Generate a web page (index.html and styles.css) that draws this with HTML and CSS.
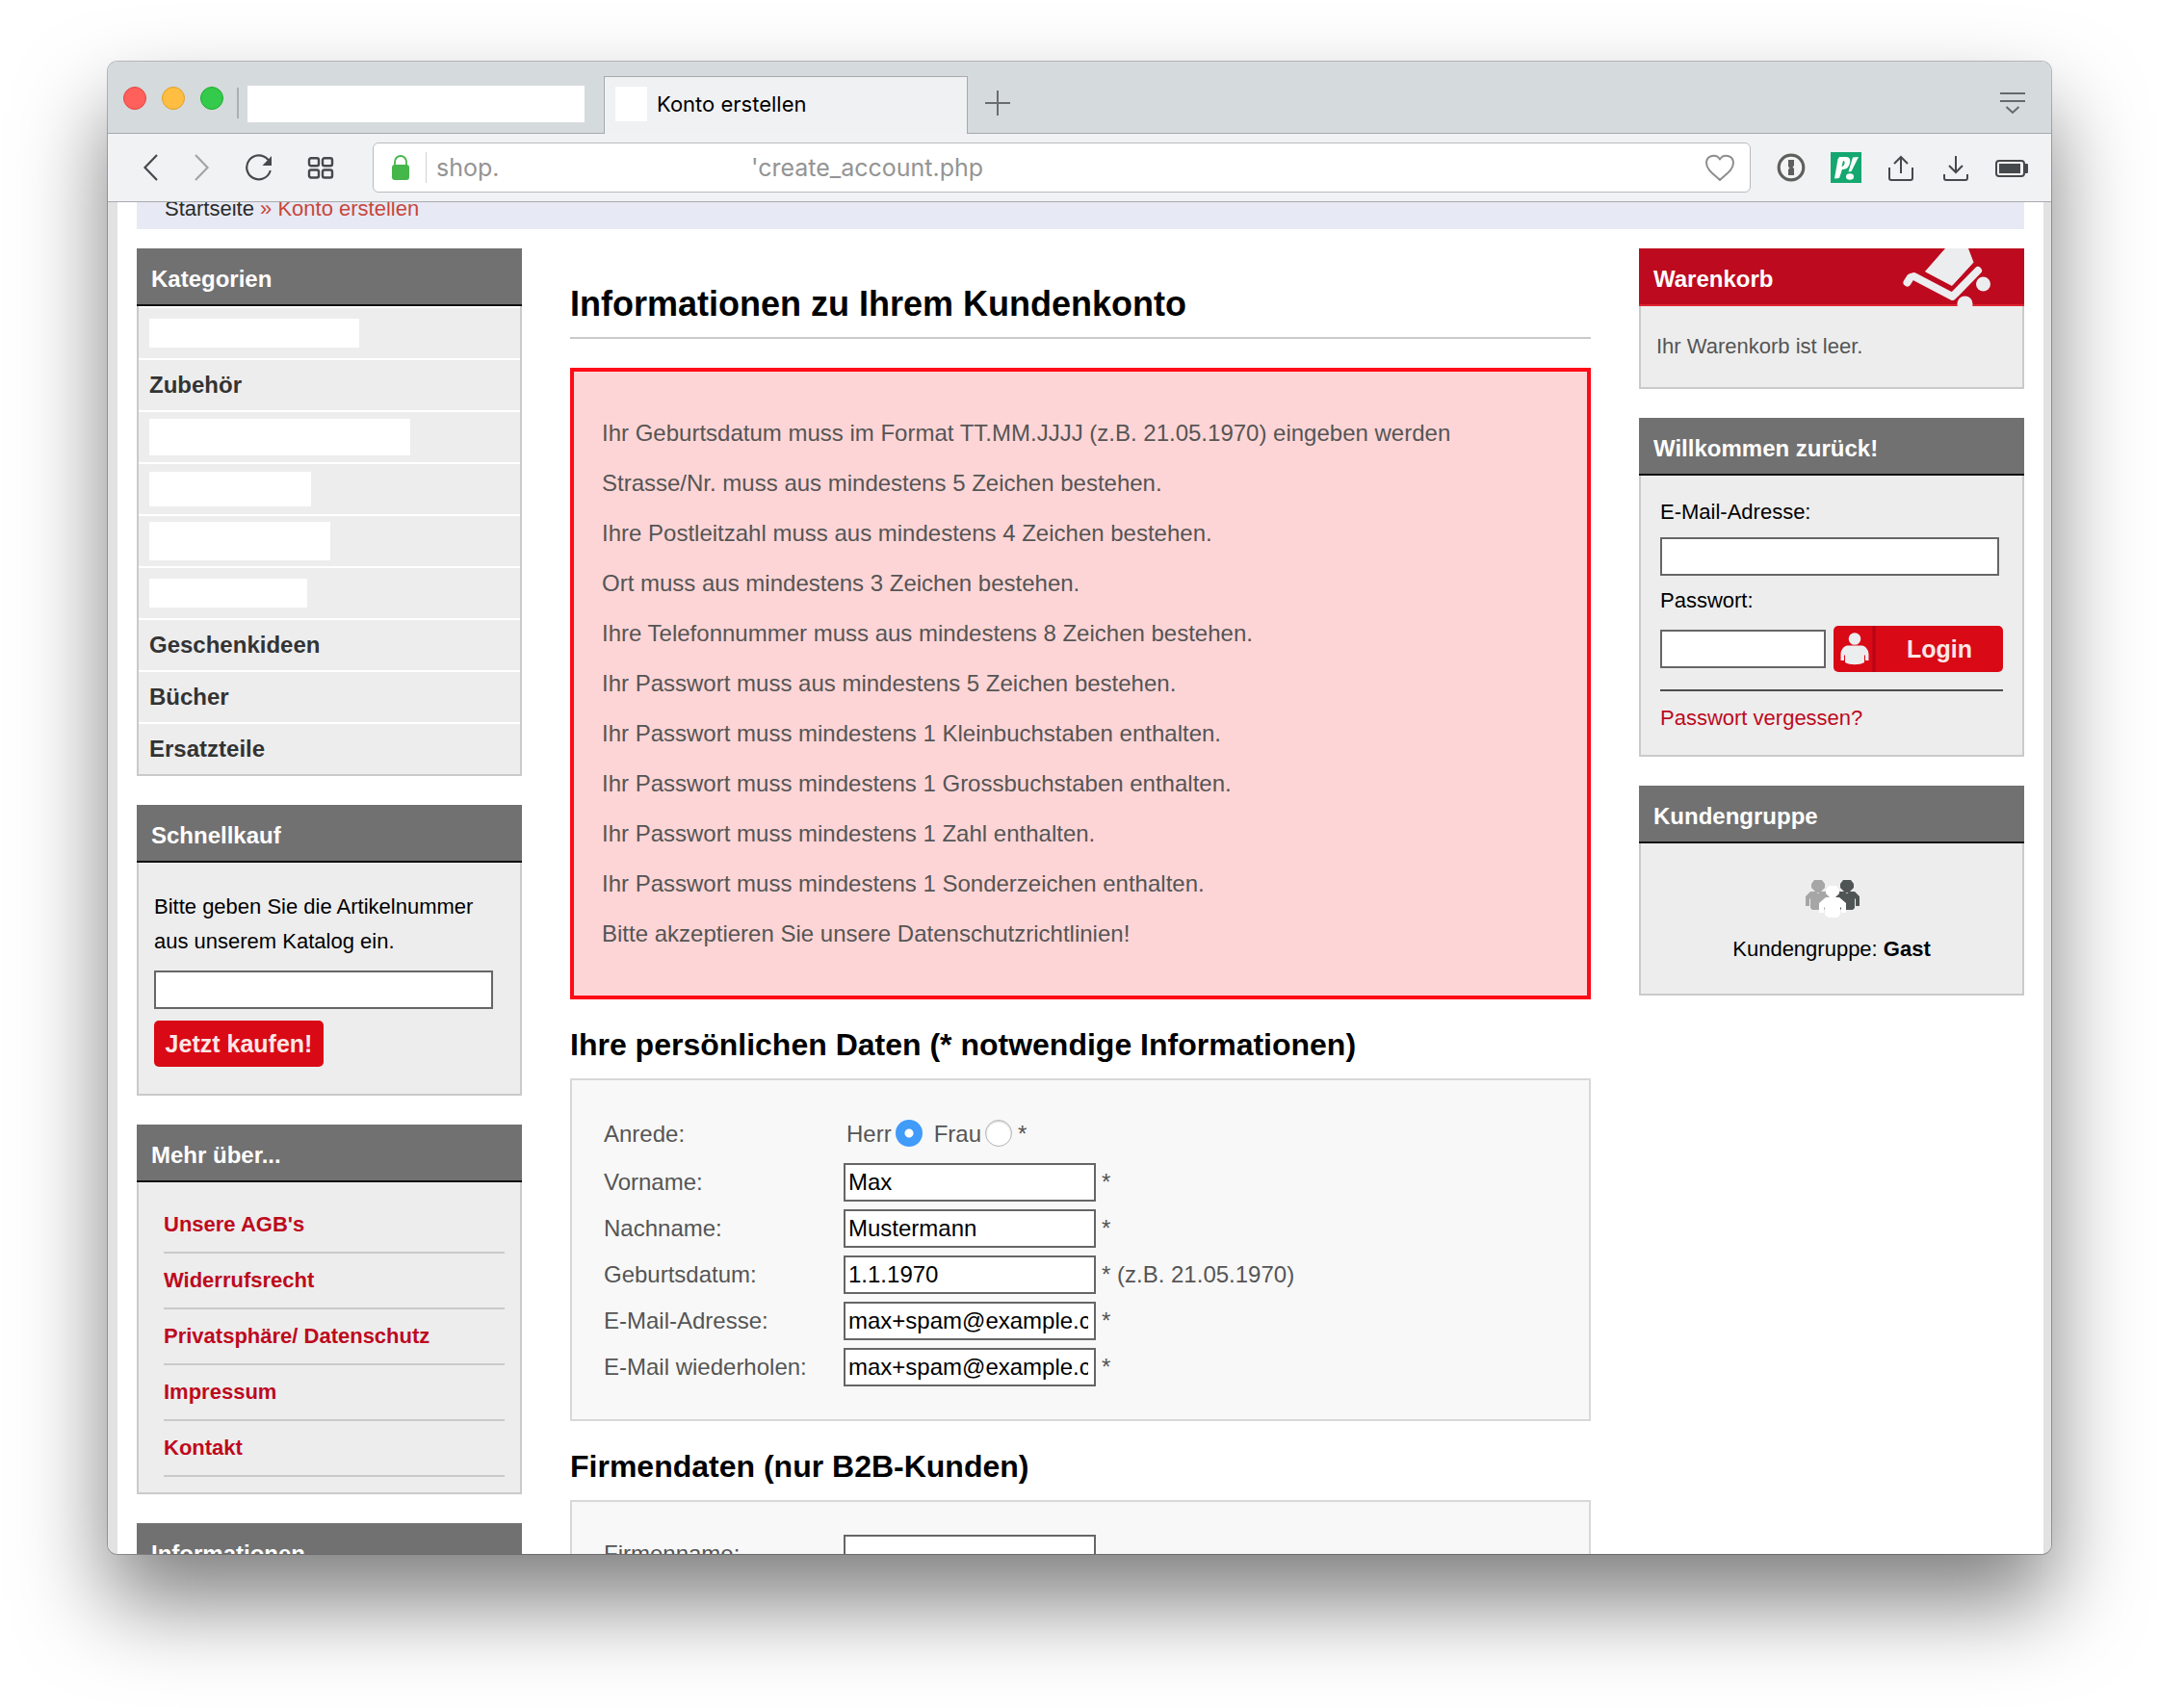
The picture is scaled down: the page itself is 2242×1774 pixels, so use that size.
FILE: index.html
```html
<!DOCTYPE html>
<html lang="de">
<head>
<meta charset="utf-8">
<title>Konto erstellen</title>
<link rel="stylesheet" href="styles.css">
</head>
<body>
<div class="window">
  <header class="tabbar">
    <div class="lights"><span class="light red"></span><span class="light yellow"></span><span class="light green"></span></div>
    <span class="tab-divider"></span>
    <span class="tab-blank"></span>
    <div class="tab"><span class="favicon"></span>Konto erstellen</div>
    <button class="icon-button" type="button" aria-label="Neuer Tab"><svg width="26" height="26" viewBox="0 0 26 26" fill="none" stroke="#6a6d6e" stroke-width="2"><path d="M13 0v26M0 13h26"/></svg></button>
    <button class="icon-button tab-menu" type="button" aria-label="Tab-Menü"><svg width="26" height="24" viewBox="0 0 26 24" fill="none" stroke="#66696b" stroke-width="2"><path d="M0 2h26M0 10h26M6.500 16l6.500 6 6.500-6"/></svg></button>
  </header>
  <nav class="toolbar">
    <div class="nav-buttons">
      <button class="icon-button" type="button" aria-label="Zurück"><svg width="28" height="28" viewBox="0 0 28 28" fill="none" stroke="#46494b" stroke-width="2.200"><path d="M20 1L7.500 14 20 27"/></svg></button>
      <button class="icon-button" type="button" aria-label="Vorwärts"><svg width="28" height="28" viewBox="0 0 28 28" fill="none" stroke="#a3a5a7" stroke-width="2.200"><path d="M4 1l12.500 13L4 27"/></svg></button>
      <button class="icon-button" type="button" aria-label="Neu laden"><svg width="28" height="28" viewBox="0 0 28 28" fill="none" stroke="#46494b" stroke-width="2.200"><path d="M25.500 18A12.500 12.500 0 1 1 23 5.500" stroke-linecap="round"/><path d="M27 2v10H17.500z" fill="#46494b" stroke="none"/></svg></button>
      <button class="icon-button" type="button" aria-label="Schnellwahl"><svg width="28" height="28" viewBox="0 0 28 28" fill="none" stroke="#46494b" stroke-width="2.400"><rect x="2" y="4.200" width="10" height="8" rx="2"/><rect x="16" y="4.200" width="10" height="8" rx="2"/><rect x="2" y="16.500" width="10" height="8" rx="2"/><rect x="16" y="16.500" width="10" height="8" rx="2"/></svg></button>
    </div>
    <div class="address">
      <svg width="18" height="26" viewBox="0 0 18 26"><rect y="10" width="18" height="16" rx="3" fill="#45b649"/><path d="M3 11V7a6 6 0 0 1 12 0v4" fill="none" stroke="#45b649" stroke-width="1.800"/></svg>
      <span class="address-divider"></span>
      <span class="host">shop.</span>
      <span class="path">'create_account.php</span>
      <button class="icon-button heart" type="button" aria-label="Lesezeichen"><svg width="30" height="28" viewBox="0 0 30 28" fill="none" stroke="#8b8d8f" stroke-width="2" stroke-linejoin="round"><path d="M15 27C10 22 1 17 1 9a7.500 7.500 0 0 1 14-3.500A7.500 7.500 0 0 1 29 9c0 8-9 13-14 18z"/></svg></button>
    </div>
    <div class="tools">
      <button class="icon-button" type="button" aria-label="Passwortmanager"><svg width="32" height="32" viewBox="0 0 32 32"><circle cx="16" cy="16" r="12.800" fill="#f4f4f5" stroke="#5f5f5d" stroke-width="3.200"/><path d="M13 8h6v6l-1.500 1.500L19 17v7h-6v-6l1.500-1.500L13 15z" fill="#5f5f5d"/></svg></button>
      <button class="icon-button" type="button" aria-label="Erweiterung"><svg width="32" height="32" viewBox="0 0 32 32"><path fill="#14a870" d="M0 0h32v32H0z"/><path d="M9 5h7c5 0 5 5 3 9-1.500 3-4 4-7 4l-3 9-5 .5 3.500-20zM13 9l-1.500 6c3 0 4.500-6 1.500-6zM23 5.500l6-.5-7.500 15-3 .5z" fill="#fff" fill-rule="evenodd"/><ellipse cx="20" cy="25.500" rx="4" ry="3.200" fill="#fff"/></svg></button>
      <button class="icon-button" type="button" aria-label="Teilen"><svg width="32" height="32" viewBox="0 0 32 32" fill="none" stroke="#46494b" stroke-width="2"><path d="M4 16v11a2 2 0 0 0 2 2h20a2 2 0 0 0 2-2V16M16 22V5M9 12l7-7 7 7"/></svg></button>
      <button class="icon-button" type="button" aria-label="Downloads"><svg width="32" height="32" viewBox="0 0 32 32" fill="none" stroke="#46494b" stroke-width="2"><path d="M4 23v4a2 2 0 0 0 2 2h20a2 2 0 0 0 2-2v-4M16 4v17M9 14l7 7 7-7"/></svg></button>
      <button class="icon-button" type="button" aria-label="Akku"><svg width="34" height="32" viewBox="0 0 34 32"><rect x="1" y="9" width="29" height="16" rx="3" fill="none" stroke="#46494b" stroke-width="2"/><path d="M4 12h22v10H4zM30 12h3a1 1 0 0 1 1 1v8a1 1 0 0 1-1 1h-3z" fill="#46494b"/></svg></button>
    </div>
  </nav>
  <div class="viewport">
    <div class="page">
      <div class="breadcrumb"><a href="#">Startseite</a> <span class="crumb">» <a href="#">Konto erstellen</a></span></div>
      <div class="columns">
        <aside class="side">
          <section class="box">
            <h3 class="box-title">Kategorien</h3>
            <ul class="categories">
              <li><span class="blank blank-a"></span></li>
              <li><a href="#">Zubehör</a></li>
              <li><span class="blank blank-b"></span></li>
              <li><span class="blank blank-c"></span></li>
              <li><span class="blank blank-d"></span></li>
              <li><span class="blank blank-e"></span></li>
              <li><a href="#">Geschenkideen</a></li>
              <li><a href="#">Bücher</a></li>
              <li><a href="#">Ersatzteile</a></li>
            </ul>
          </section>
          <section class="box">
            <h3 class="box-title">Schnellkauf</h3>
            <form class="quickbuy">
              <label for="artikel">Bitte geben Sie die Artikelnummer aus unserem Katalog ein.</label>
              <input class="field field-wide" id="artikel" type="text">
              <button class="red-button" type="button">Jetzt kaufen!</button>
            </form>
          </section>
          <section class="box">
            <h3 class="box-title">Mehr über...</h3>
            <ul class="links">
              <li><a href="#">Unsere AGB's</a></li>
              <li><a href="#">Widerrufsrecht</a></li>
              <li><a href="#">Privatsphäre/ Datenschutz</a></li>
              <li><a href="#">Impressum</a></li>
              <li><a href="#">Kontakt</a></li>
            </ul>
          </section>
          <section class="box">
            <h3 class="box-title">Informationen</h3>
          </section>
        </aside>
        <main class="main">
          <h1>Informationen zu Ihrem Kundenkonto</h1>
          <div class="errors">
            <p>Ihr Geburtsdatum muss im Format TT.MM.JJJJ (z.B. 21.05.1970) eingeben werden</p>
            <p>Strasse/Nr. muss aus mindestens 5 Zeichen bestehen.</p>
            <p>Ihre Postleitzahl muss aus mindestens 4 Zeichen bestehen.</p>
            <p>Ort muss aus mindestens 3 Zeichen bestehen.</p>
            <p>Ihre Telefonnummer muss aus mindestens 8 Zeichen bestehen.</p>
            <p>Ihr Passwort muss aus mindestens 5 Zeichen bestehen.</p>
            <p>Ihr Passwort muss mindestens 1 Kleinbuchstaben enthalten.</p>
            <p>Ihr Passwort muss mindestens 1 Grossbuchstaben enthalten.</p>
            <p>Ihr Passwort muss mindestens 1 Zahl enthalten.</p>
            <p>Ihr Passwort muss mindestens 1 Sonderzeichen enthalten.</p>
            <p>Bitte akzeptieren Sie unsere Datenschutzrichtlinien!</p>
          </div>
          <h2>Ihre persönlichen Daten (* notwendige Informationen)</h2>
          <form class="panel">
            <div class="row row-radio">
              <span class="row-label">Anrede:</span>
              <label for="herr">Herr</label><input class="radio" id="herr" type="radio" name="anrede" checked>
              <label class="second" for="frau">Frau</label><input class="radio" id="frau" type="radio" name="anrede"><span>*</span>
            </div>
            <div class="row"><label class="row-label" for="vorname">Vorname:</label><input class="field" id="vorname" type="text" value="Max"><span>*</span></div>
            <div class="row"><label class="row-label" for="nachname">Nachname:</label><input class="field" id="nachname" type="text" value="Mustermann"><span>*</span></div>
            <div class="row"><label class="row-label" for="geburt">Geburtsdatum:</label><input class="field" id="geburt" type="text" value="1.1.1970"><span>* (z.B. 21.05.1970)</span></div>
            <div class="row"><label class="row-label" for="mail">E-Mail-Adresse:</label><input class="field" id="mail" type="text" value="max+spam@example.com"><span>*</span></div>
            <div class="row"><label class="row-label" for="mail2">E-Mail wiederholen:</label><input class="field" id="mail2" type="text" value="max+spam@example.com"><span>*</span></div>
          </form>
          <h2>Firmendaten (nur B2B-Kunden)</h2>
          <form class="panel">
            <div class="row"><label class="row-label" for="firma">Firmenname:</label><input class="field" id="firma" type="text"></div>
          </form>
        </main>
        <aside class="side">
          <section class="box">
            <h3 class="box-title cart">Warenkorb
              <svg width="92" height="60" viewBox="0 0 92 60" fill="#ecedef"><path d="M44.500 0h23L73 14.500 51 38.500 23.500 24z" stroke="#ecedef" stroke-width="1" stroke-linejoin="round"/><path d="M4.500 35.500L8 30l3.500-1L51.500 50 78 23" fill="none" stroke="#ecedef" stroke-width="8" stroke-linecap="round" stroke-linejoin="round"/><circle cx="83.500" cy="37" r="7.500"/><circle cx="64.500" cy="57.500" r="8"/></svg>
            </h3>
            <p class="cart-text">Ihr Warenkorb ist leer.</p>
          </section>
          <section class="box">
            <h3 class="box-title">Willkommen zurück!</h3>
            <form class="login">
              <label for="login-mail">E-Mail-Adresse:</label>
              <input class="field field-wide" id="login-mail" type="text">
              <label for="login-pass">Passwort:</label>
              <div class="login-row">
                <input class="field" id="login-pass" type="password">
                <button class="red-button login-button" type="button">
                  <svg width="44" height="48" viewBox="0 0 44 48"><g fill="#ecedef"><circle cx="22" cy="13.500" r="6.300"/><path d="M14 20.500h16c4 1 6.500 5 6.500 9V36H33v-5l-1-1v8c-5 3-15 3-20 0v-8l-1 1v5H7.500v-6.500c0-4 2.500-8 6.500-9z"/></g><path d="M40.500 0h3v48h-3z" fill="#b50712"/></svg>
                  <span>Login</span>
                </button>
              </div>
              <p class="forgot"><a href="#">Passwort vergessen?</a></p>
            </form>
          </section>
          <section class="box">
            <h3 class="box-title">Kundengruppe</h3>
            <div class="group">
              <svg width="60" height="64" viewBox="-1 0 60 64"><path d="M11 10h8l3 4v4l-5 5h-4l-5-5v-4zM7 22h5l3 2 3-2h5l5 5v10h-4v-7l-1-1v10l-2 2H9l-2-2V29l-1 1v7H2V27z" fill="#a6a6a6"/><path d="M41 10h8l3 4v4l-5 5h-4l-5-5v-4zM37 22h5l3 2 3-2h5l5 5v10h-4v-7l-1-1v10l-2 2H39l-2-2V29l-1 1v7h-4V27z" fill="#4f5555"/><path d="M26 16h8l3 4v4l-4 4h4l7 6v10h-5v-5l-1-1v8l-3 3h-9l-4-3v-8l-1 1v5h-5V34l7-6h4l-4-4v-4z" fill="#fff"/></svg>
              <p>Kundengruppe: <b>Gast</b></p>
            </div>
          </section>
        </aside>
      </div>
    </div>
  </div>
</div>
</body>
</html>
```
FILE: styles.css
```css
* { box-sizing: border-box; }

body {
  margin: 0;
  height: 100vh;
  padding: 64px 112px 160px;
  background: #fff;
  font: 22px/36px "Liberation Sans", Arial, sans-serif;
  color: #000;
  overflow: hidden;
}

h1, h2, h3, p, ul { margin: 0; padding: 0; }
ul { list-style: none; }
a { color: inherit; text-decoration: none; }
button, input { font: inherit; margin: 0; }

/* Browser window */
.window {
  display: flex;
  flex-direction: column;
  height: 100%;
  overflow: hidden;
  border-radius: 10px;
  background: #fff;
  box-shadow: 0 0 0 1px rgba(0, 0, 0, .25), 0 50px 92px rgba(0, 0, 0, .5);
}

.icon-button {
  display: flex;
  padding: 0;
  border: 0;
  background: none;
}

.tabbar {
  display: flex;
  align-items: center;
  height: 75px;
  flex: none;
  padding: 0 27px 0 16px;
  background: #d5dadd;
  box-shadow: inset 0 -1px #a6aaad;
}

.lights { display: flex; gap: 16px; }
.light { width: 24px; height: 24px; border-radius: 50%; border: 1px solid; }
.red { background: #ff605c; border-color: #e2463f; }
.yellow { background: #ffbe41; border-color: #dfa023; }
.green { background: #34ca4b; border-color: #1dad2b; }

.tab-divider { width: 2px; height: 32px; margin: 10px 9px 0 14px; background: #aaafb1; }
.tab-blank { width: 350px; height: 38px; margin: 12px 20px 0 0; background: #fff; }

.tab {
  display: flex;
  align-items: center;
  gap: 10px;
  width: 378px;
  height: 60px;
  margin-right: 18px;
  padding: 0 0 3px 11px;
  align-self: flex-end;
  border: 1px solid #a6aaad;
  border-bottom: 0;
  background: #f0f1f3;
  font: 22px/28px Inter, sans-serif;
}
.favicon { width: 33px; height: 36px; background: #fff; }
.tabbar .icon-button { margin-top: 11px; }
.tabbar .tab-menu { margin-left: auto; }

.toolbar {
  display: flex;
  align-items: center;
  gap: 40px;
  height: 71px;
  flex: none;
  padding: 0 24px 0 30px;
  background: #f1f2f4;
  border-bottom: 1px solid #a9abae;
}
.nav-buttons { display: flex; gap: 28px; padding-left: 1px; }
.nav-buttons .icon-button:nth-child(4) { margin-left: 8px; }

.address {
  display: flex;
  align-items: center;
  flex: 1;
  height: 52px;
  padding: 0 16px 0 19px;
  border: 1px solid #b9bbbe;
  border-radius: 6px;
  background: #fff;
  color: #949494;
  font: 25px/32px Inter, sans-serif;
}
.address-divider { width: 1px; height: 32px; margin: 0 10px 0 17px; background: #d0d2d4; }
.host { width: 327px; }
.heart { margin-left: auto; }

.tools { display: flex; gap: 25px; margin-left: -14px; }

/* Shop page */
.viewport {
  flex: 1;
  min-height: 0;
  overflow: hidden;
  padding: 0 8px 0 10px;
  background: #e2e2e2;
}
.page { min-height: 100%; padding: 0 20px; background: #fff; }

/* The page is scrolled down, so the breadcrumb starts under the toolbar */
.breadcrumb {
  margin-top: -14px;
  padding-left: 29px;
  line-height: 42px;
  background: #e7eaf4;
  color: #2b2b2b;
}
.crumb { color: #c8463c; }

.columns {
  display: grid;
  grid-template-columns: 400px minmax(0, 1fr) 400px;
  column-gap: 50px;
  padding-top: 20px;
}
.side { display: flex; flex-direction: column; gap: 30px; }

.box {
  background: #ededed;
  box-shadow: inset 0 0 0 2px #cacaca;
  padding-bottom: 2px;
}
.box-title {
  height: 60px;
  padding: 6px 15px 0;
  border-bottom: 2px solid #111;
  background: #717171;
  color: #fff;
  font-size: 24px;
  line-height: 52px;
}

.categories { margin: 0 2px; font-size: 24px; font-weight: bold; color: #333; }
.categories li {
  display: flex;
  align-items: center;
  height: 54px;
  padding-left: 11px;
  border-top: 2px solid #fff;
}
.blank { background: #fff; }
.blank-a { width: 218px; height: 30px; }
.blank-b { width: 271px; height: 38px; }
.blank-c { width: 168px; height: 36px; }
.blank-d { width: 188px; height: 40px; }
.blank-e { width: 164px; height: 30px; }

.field {
  width: 262px;
  height: 40px;
  padding: 0 6px 0 3px;
  border: 2px solid #666;
  border-radius: 0;
  background: #fff;
  color: #000;
  font-size: 24px;
}
.field-wide { width: 352px; }

.quickbuy {
  display: flex;
  flex-direction: column;
  align-items: flex-start;
  gap: 12px;
  padding: 28px 18px;
}

.red-button {
  width: 176px;
  height: 48px;
  padding: 0;
  border: 0;
  border-radius: 5px;
  background: #d90915;
  color: #fbe6e6;
  font-size: 25px;
  font-weight: bold;
}

.links { padding: 16px 18px 16px 28px; font-weight: bold; color: #bd0a1e; }
.links li { border-bottom: 2px solid #cacaca; line-height: 56px; }

.main { color: #555; font-size: 24px; }
h1 {
  padding: 37px 0 13px;
  border-bottom: 2px solid #cacaca;
  color: #000;
  font-size: 36px;
  line-height: 42px;
}
.errors {
  margin-top: 30px;
  padding: 38px 29px;
  border: 4px solid #ff0a17;
  background: #fed5d6;
  line-height: 52px;
}
h2 { padding: 28px 0 16px; color: #000; font-size: 32px; line-height: 38px; }

.panel { padding: 30px 33px; border: 2px solid #d8d8d8; background: #f8f8f8; }
.row { display: flex; align-items: center; height: 48px; }
.row-label { width: 249px; }
.row-radio { height: 52px; }
.row-radio .row-label { width: 252px; }
.row span:last-child { margin-left: 6px; }
.second { margin-left: 12px; }

.radio {
  appearance: none;
  width: 28px;
  height: 28px;
  margin: 0 0 3px 4px;
  border: 1px solid #b5b5b5;
  border-radius: 50%;
  background: #fff;
  box-shadow: inset 0 1px 2px rgba(0, 0, 0, .2);
}
.radio:checked {
  border: 0;
  background: radial-gradient(circle, #fff 0 4px, #409bf9 5px);
  box-shadow: none;
}

.cart {
  display: flex;
  justify-content: space-between;
  padding-right: 34px;
  border-bottom-color: #dc2430;
  background: #bd0a1e;
}
.cart svg { margin-top: -6px; }
.cart-text { padding: 24px 18px; color: #555; }

.login { padding: 20px 22px; }
.login label { display: block; margin-bottom: 8px; }
.login .field { display: block; margin-bottom: 8px; }
.login-row {
  display: flex;
  align-items: center;
  justify-content: space-between;
  margin-bottom: 18px;
}
.login-row .field { width: 172px; margin: 0; }
.login-button { display: flex; align-items: center; }
.login-button span { flex: 1; }
.forgot { padding-top: 10px; border-top: 2px solid #4d4d4d; color: #bd0a1e; }

.group { padding: 28px 0; text-align: center; }
.group svg { display: block; margin: 0 auto; }
```
